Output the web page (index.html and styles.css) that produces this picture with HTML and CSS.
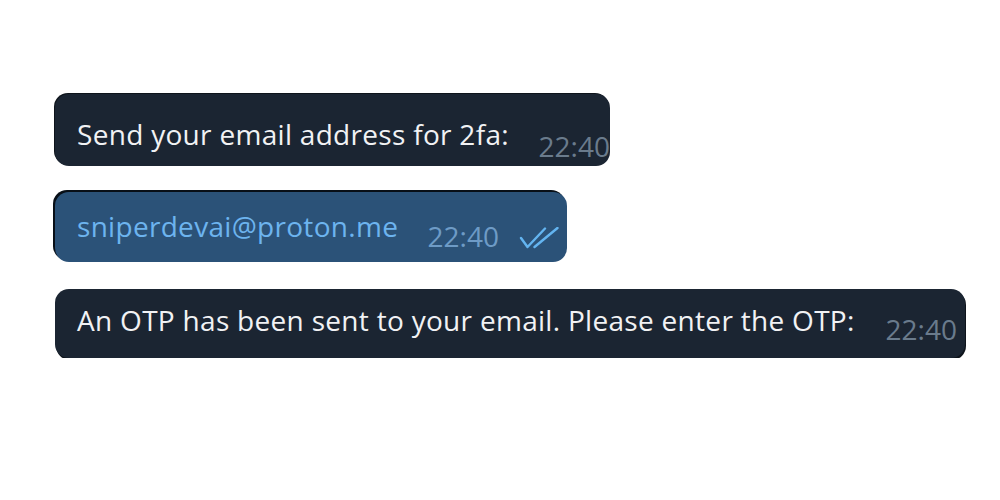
FILE: index.html
```html
<!DOCTYPE html>
<html lang="en">
<head>
<meta charset="utf-8">
<title>Chat</title>
<link rel="stylesheet" href="styles.css">
</head>
<body>
<div class="chat">
  <div class="bubble incoming b1">
    <span class="text">Send your email address for 2fa:</span>
    <span class="time">22:40</span>
  </div>
  <div class="bubble outgoing b2">
    <span class="text link">sniperdevai@proton.me</span>
    <span class="time">22:40</span>
    <svg class="checks" width="40" height="22" viewBox="0 0 40 22" fill="none" stroke="currentColor" stroke-width="2.4" stroke-linecap="round" stroke-linejoin="round">
      <path d="M2 11 L8.5 20 L26 1.5"/>
      <path d="M15.5 20 L38.5 1"/>
    </svg>
  </div>
  <div class="bubble incoming b3">
    <span class="text">An OTP has been sent to your email. Please enter the OTP:</span>
    <span class="time">22:40</span>
  </div>
</div>
</body>
</html>
```

FILE: styles.css
```css
html, body {
  margin: 0;
  padding: 0;
  background: #ffffff;
}
body {
  font-family: "Open Sans", "Noto Sans", "DejaVu Sans", sans-serif;
}
.chat {
  display: flex;
  flex-direction: column;
  align-items: flex-start;
  padding: 94px 0 0 55px;
}
.bubble {
  display: flex;
  align-items: flex-start;
  box-sizing: border-box;
  border-radius: 14px;
  padding: 0 8px 0 22px;
  overflow: hidden;
}
.incoming {
  background: #1b2532;
}
.outgoing {
  background: #2b5278;
}
.b1 {
  width: 555px;
  height: 72px;
  padding-right: 0;
  box-shadow: -1px -1px 0 #0e141b;
}
.b2 {
  margin-top: 26px;
  width: 512px;
  height: 70px;
  box-shadow: -2px -2px 0 #080f17;
}
.b3 {
  margin-top: 27px;
  width: 910px;
  height: 69px;
  box-shadow: 1px 2px 0 #0e141b;
}
.text {
  color: #f1f2f4;
  font-size: 28px;
  line-height: 32px;
  letter-spacing: 0.3px;
  white-space: nowrap;
}
.link { color: #6db4ef; }
.time {
  color: #6a7b8c;
  font-size: 28px;
  line-height: 32px;
  margin-left: auto;
  white-space: nowrap;
}
.outgoing .time { color: #6e9bc6; }
.b1 .text { margin-top: 24px; }
.b1 .time { margin-top: 36px; }
.b2 .text { margin-top: 18px; }
.b2 .time { margin-top: 28px; }
.b3 .text { margin-top: 15px; }
.b3 .time { margin-top: 24px; }
.checks {
  color: #63b4f0;
  margin: 35px 0 0 20px;
  flex: none;
}
```
